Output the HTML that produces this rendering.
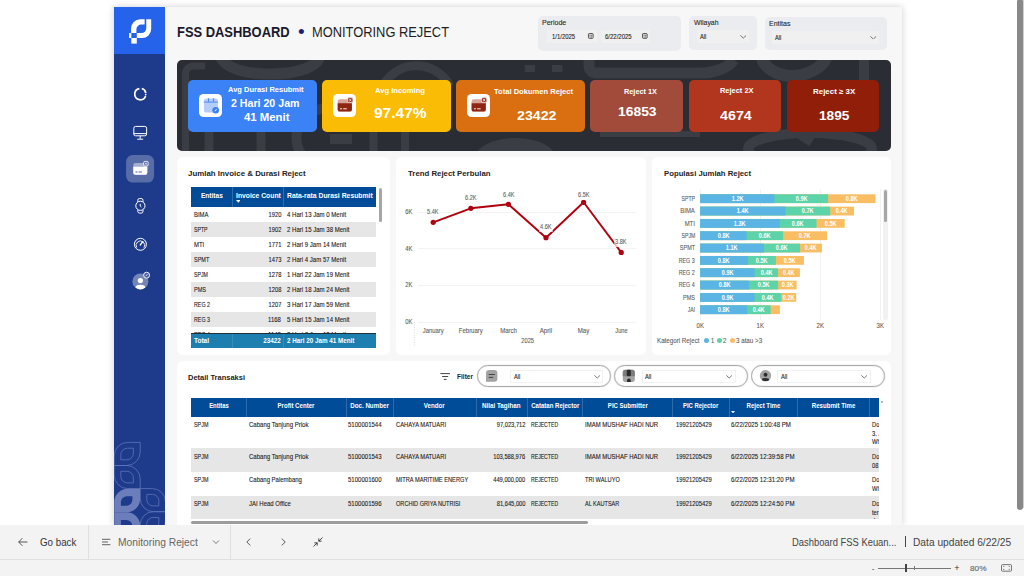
<!DOCTYPE html>
<html lang="id"><head><meta charset="utf-8"><title>FSS Dashboard - Monitoring Reject</title>
<style>
*{box-sizing:border-box}
html,body{margin:0;padding:0}
body{width:1024px;height:576px;overflow:hidden;background:#fff;position:relative;font-family:'Liberation Sans',sans-serif}
#r{position:absolute;left:0;top:0;width:1024px;height:576px;overflow:hidden}
#r div,#r span,#r svg{position:absolute}
#r span{white-space:pre;display:block}
#r span.s{-webkit-text-stroke:.1px currentColor}
</style></head>
<body><div id="r">
<div style="left:114px;top:7.2px;width:788px;height:518px;background:#f7f7f7;box-shadow:0 0 7px rgba(0,0,0,.2);"></div>
<div style="left:113.8px;top:7px;width:51.3px;height:518px;background:#1e3a8a;"></div>
<div style="left:113.8px;top:7px;width:51.3px;height:46.8px;background:#2563eb;"></div>
<svg style="left:113.8px;top:7px" width="51.3" height="518" viewBox="113.8 7 51.3 518"><path fill="#fff" d="M144.4 19.3H139.9A9 9 0 0 0 130.9 28.3V33.1H136.2V29.3A4.8 4.8 0 0 1 141 24.5H144.4Z"/><path fill="#fff" d="M146.1 19.3H151V29A9 9 0 0 1 142 38H136.6V33.1H141.3A4.8 4.8 0 0 0 146.1 28.3Z"/><rect x="128.9" y="33.1" width="2.2" height="4.9" fill="#fff"/><rect x="131.1" y="38" width="5.5" height="5.6" fill="#fff"/><g fill="none" stroke="#fff" stroke-width="1.7"><path d="M141.6 88.5A5.6 5.6 0 0 1 145.6 93"/><path d="M145.4 96A5.6 5.6 0 1 1 139.2 88.6"/></g><circle cx="145.5" cy="94.6" r=".9" fill="#fff"/><g fill="none" stroke="#fff" stroke-width="1"><rect x="133.6" y="126.4" width="12.8" height="9.4" rx="1.8"/><path d="M133.6 133.6h12.8M140 135.8v3M137 139.2h6"/></g><rect x="125.9" y="155" width="28" height="27.6" rx="6.5" fill="#fff" fill-opacity=".26"/><rect x="133.1" y="163" width="14" height="11.7" rx="2" fill="#fff" fill-opacity=".45"/><path d="M133.1 166.7h14v6a2 2 0 0 1-2 2h-10a2 2 0 0 1-2-2z" fill="#fff"/><path d="M135.3 172h2M138.3 172h3.4" stroke="#3a54a0" stroke-width=".9"/><rect x="143.4" y="161.4" width="4.6" height="4.6" rx="1.2" fill="#5a6eae" stroke="#fff" stroke-width=".8"/><path d="M144.7 162.7l2 2M146.7 162.7l-2 2" stroke="#fff" stroke-width=".7"/><g fill="none" stroke="#fff" stroke-width="1"><circle cx="140.2" cy="205.8" r="4.6"/><path d="M137.6 201.9v-1.6a1.8 1.8 0 0 1 1.8-1.8h1.6a1.8 1.8 0 0 1 1.8 1.8v1.6M137.6 209.7v1.6a1.8 1.8 0 0 0 1.8 1.8h1.6a1.8 1.8 0 0 0 1.8-1.8v-1.6M140 203.8v2.2l1.2 1"/></g><g fill="none" stroke="#fff"><circle cx="140.2" cy="244.3" r="6" stroke-width="1"/><path d="M136.6 247.6A4.3 4.3 0 1 1 143.8 247.6" stroke-width=".9"/><path d="M140 245l2.6-3.4" stroke-width="1.3" stroke-linecap="round"/></g><circle cx="140.2" cy="281.4" r="8" fill="#fff" fill-opacity=".38"/><circle cx="140.2" cy="280.6" r="2.6" fill="#fff"/><path d="M135.2 287.6a5 2.9 0 0 1 10 0a8 8 0 0 1-10 0z" fill="#fff"/><circle cx="146.4" cy="275.2" r="3" fill="#4a5fa6" stroke="#fff" stroke-width=".9"/><path d="M145.4 276.2l1.9-2" stroke="#fff" stroke-width=".8"/><g fill="none" stroke="#5f75ba" stroke-width=".8"><path d="M127.5 442.4H140.0V452.0A13.5 13.5 0 0 1 126.5 465.5H114.0V455.9A13.5 13.5 0 0 1 127.5 442.4Z"/><path d="M127.2 448.2H133.2V453.2A6.6 6.6 0 0 1 126.6 459.8H120.6V454.8A6.6 6.6 0 0 1 127.2 448.2Z"/><path d="M114.0 465.5H126.5A13.5 13.5 0 0 1 140.0 479.0V488.6H127.5A13.5 13.5 0 0 1 114.0 475.1Z"/><path d="M120.6 471.3H126.6A6.6 6.6 0 0 1 133.2 477.9V482.9H127.2A6.6 6.6 0 0 1 120.6 476.3Z"/><path d="M140.0 488.6H152.1A13.2 13.2 0 0 1 165.3 501.8V511.7H153.2A13.2 13.2 0 0 1 140.0 498.5Z"/><path d="M146.6 494.4H152.4A6.2 6.2 0 0 1 158.6 500.6V505.9H152.8A6.2 6.2 0 0 1 146.6 499.7Z"/><path d="M153.2 511.7H165.3V521.6A13.2 13.2 0 0 1 152.1 534.8H140.0V524.9A13.2 13.2 0 0 1 153.2 511.7Z"/><path d="M152.8 517.5H158.6V522.8A6.2 6.2 0 0 1 152.4 529.0H146.6V523.7A6.2 6.2 0 0 1 152.8 517.5Z"/></g><path fill="#6b7dba" fill-rule="evenodd" d="M127.5 488.7H140.0V498.7A13.5 13.5 0 0 1 126.5 512.2H114.0V502.2A13.5 13.5 0 0 1 127.5 488.7ZM126.7 496.2H132.2V499.8A6.0 6.0 0 0 1 126.2 505.8H120.7V502.2A6.0 6.0 0 0 1 126.7 496.2Z"/><path fill="#6b7dba" fill-rule="evenodd" d="M114.0 512.2H126.5A13.5 13.5 0 0 1 140.0 525.7V535.6H127.5A13.5 13.5 0 0 1 114.0 522.1ZM120.7 520.0H126.2A6.0 6.0 0 0 1 132.2 526.0V529.6H126.7A6.0 6.0 0 0 1 120.7 523.6Z"/></svg>
<span style="left:176.60px;top:23px;font-size:14.2px;line-height:18px;font-weight:700;color:#1a1a2e;transform:scaleX(0.9098);transform-origin:0 0;">FSS DASHBOARD</span>
<span style="left:297.97px;top:20px;font-size:19px;line-height:23px;color:#1a1f80;transform:scaleX(1.0000);transform-origin:50% 0;">•</span>
<span style="left:312.40px;top:23px;font-size:14.2px;line-height:18px;color:#1f1f1f;transform:scaleX(0.9068);transform-origin:0 0;">MONITORING REJECT</span>
<div style="left:537.5px;top:16px;width:143.5px;height:34.5px;background:#ebecf0;border-radius:5px;"></div>
<div style="left:689px;top:16px;width:67.5px;height:34px;background:#ebecf0;border-radius:5px;"></div>
<div style="left:764.5px;top:17px;width:122.5px;height:32.5px;background:#ebecf0;border-radius:5px;"></div>
<span class="s" style="left:541.90px;top:17px;font-size:7.6px;line-height:11px;color:#252423;transform:scaleX(0.9241);transform-origin:0 0;">Periode</span>
<div style="left:547px;top:30.3px;width:49.6px;height:13.1px;background:#f0f0f0;"></div>
<div style="left:600.9px;top:30.3px;width:49.4px;height:13.1px;background:#f0f0f0;"></div>
<span class="s" style="left:551.80px;top:32px;font-size:7px;line-height:9px;color:#252423;transform:scaleX(0.8477);transform-origin:0 0;">1/1/2025</span>
<span class="s" style="left:605.40px;top:32px;font-size:7px;line-height:9px;color:#252423;transform:scaleX(0.8570);transform-origin:0 0;">6/22/2025</span>
<svg style="left:586.7px;top:31.9px" width="8" height="8" viewBox="-1 -1 8 8"><rect x=".45" y=".5" width="4.7" height="4.8" rx=".8" fill="#e9e9e9" stroke="#4a4a4a" stroke-width=".9"/><path d="M.45 2h4.7M2.1 2v3.3M3.5 2v3.3" stroke="#5a5a5a" stroke-width=".5"/></svg>
<svg style="left:640.6px;top:31.9px" width="8" height="8" viewBox="-1 -1 8 8"><rect x=".45" y=".5" width="4.7" height="4.8" rx=".8" fill="#e9e9e9" stroke="#4a4a4a" stroke-width=".9"/><path d="M.45 2h4.7M2.1 2v3.3M3.5 2v3.3" stroke="#5a5a5a" stroke-width=".5"/></svg>
<span class="s" style="left:693.80px;top:17px;font-size:7.6px;line-height:11px;color:#252423;transform:scaleX(0.9069);transform-origin:0 0;">Wilayah</span>
<div style="left:697.1px;top:30.4px;width:52px;height:12.5px;background:#f0f0f0;"></div>
<span class="s" style="left:699.70px;top:32px;font-size:6.6px;line-height:9px;color:#252423;transform:scaleX(0.8597);transform-origin:0 0;">All</span>
<span class="s" style="left:769.00px;top:18px;font-size:7.6px;line-height:11px;color:#252423;transform:scaleX(0.9260);transform-origin:0 0;">Entitas</span>
<div style="left:772.2px;top:31.2px;width:107.1px;height:12.4px;background:#f0f0f0;"></div>
<span class="s" style="left:774.90px;top:33px;font-size:6.6px;line-height:9px;color:#252423;transform:scaleX(0.8597);transform-origin:0 0;">All</span>
<svg style="left:739.8px;top:35px" width="6.6" height="3.6" viewBox="0 0 6.6 3.6"><path d="M.4 .4L3.3 3.1L6.199999999999999 .4" stroke="#555" stroke-width="0.8" fill="none"/></svg>
<svg style="left:870px;top:35.8px" width="6.6" height="3.6" viewBox="0 0 6.6 3.6"><path d="M.4 .4L3.3 3.1L6.199999999999999 .4" stroke="#555" stroke-width="0.8" fill="none"/></svg>
<div style="left:177px;top:60px;width:714px;height:91px;background:#2a2d33;border-radius:5px;overflow:hidden;"></div>
<svg style="left:177px;top:60px;border-radius:5px;overflow:hidden" width="714" height="91" viewBox="177 60 714 91"><g fill="none" stroke="#3a3d43" stroke-width="9"><path d="M185.5 151V74A8 8 0 0 1 193.5 66H205" stroke-width="7"/><path d="M209 132V151M261 132V151" stroke-width="9"/><path d="M220 56C224 66 240 74 270 74S318 66 320 56" stroke-width="11"/><path d="M381 90A38 38 0 0 1 450 86" stroke-width="9"/><path d="M352 139H330M354 156A32 30 0 1 1 354 120" stroke-width="10"/><path d="M373.5 132V151M405 132V151" stroke-width="8"/><path d="M589 60V66A7 7 0 0 0 596 73H700C715 73 728 68 734 60" stroke-width="11"/><path d="M762 58C764 68 778 76 792 76S822 68 826 58" stroke-width="12"/><path d="M864 60V90" stroke-width="10"/><path d="M600 134H700" stroke-width="6"/><ellipse cx="810" cy="149" rx="62" ry="16" stroke-width="10"/><path d="M800 134L812 142" stroke-width="10"/></g><g fill="#3a3d43"><rect x="524.7" y="65" width="10.3" height="7"/><rect x="552" y="65" width="10.6" height="7"/><ellipse cx="515.5" cy="158" rx="40" ry="20"/></g></svg>
<div style="left:188.3px;top:80px;width:128.3px;height:52px;background:#3b82f6;border-radius:5px;"></div>
<div style="left:322.4px;top:80px;width:128.3px;height:52px;background:#fbbc05;border-radius:5px;"></div>
<div style="left:456.1px;top:80px;width:128.6px;height:52px;background:#d96f10;border-radius:5px;"></div>
<div style="left:590.3px;top:80px;width:92.6px;height:52px;background:#a24b3a;border-radius:5px;"></div>
<div style="left:688.6px;top:80px;width:92.5px;height:52px;background:#b1361d;border-radius:5px;"></div>
<div style="left:786.7px;top:80px;width:92.3px;height:52px;background:#911e08;border-radius:5px;"></div>
<div style="left:199.0px;top:94.1px;width:23px;height:23px;background:#fff;border-radius:4.6px;"></div>
<div style="left:333.0px;top:94.1px;width:23px;height:23px;background:#fff;border-radius:4.6px;"></div>
<div style="left:467.0px;top:94.1px;width:23px;height:23px;background:#fff;border-radius:4.6px;"></div>
<svg style="left:198.6px;top:93px" width="292" height="25" viewBox="199 93 292 25"><rect x="203.9" y="98.6" width="14" height="13.9" rx="2.6" fill="#b4cdfb"/><rect x="203.9" y="101.4" width="14" height="1.5" fill="#6da0f8"/><path d="M208.5 98.2v3.6M213.5 98.2v3.6" stroke="#4b8cf6" stroke-width="1.1"/><circle cx="215.7" cy="110.3" r="3.3" fill="#3b82f6"/><path d="M214.9 111.3l1.6-2.2" stroke="#fff" stroke-width=".9"/><g transform="translate(0 0)"><rect x="337.7" y="99.2" width="14.2" height="12.4" rx="2.2" fill="#d8a399"/><path d="M337.7 103.3h14.2v6.1a2.2 2.2 0 0 1-2.2 2.2h-9.8a2.2 2.2 0 0 1-2.2-2.2z" fill="#8f2410"/><path d="M340 108.8h2M343.2 108.8h3.6" stroke="#fff" stroke-width=".9"/><rect x="347.7" y="97.6" width="5.2" height="5" rx="1.4" fill="#9a3522" stroke="#fff" stroke-width=".6"/><path d="M349.2 99l2.2 2.2M351.4 99l-2.2 2.2" stroke="#fff" stroke-width=".8"/></g><g transform="translate(133.9 0)"><rect x="337.7" y="99.2" width="14.2" height="12.4" rx="2.2" fill="#d8a399"/><path d="M337.7 103.3h14.2v6.1a2.2 2.2 0 0 1-2.2 2.2h-9.8a2.2 2.2 0 0 1-2.2-2.2z" fill="#8f2410"/><path d="M340 108.8h2M343.2 108.8h3.6" stroke="#fff" stroke-width=".9"/><rect x="347.7" y="97.6" width="5.2" height="5" rx="1.4" fill="#9a3522" stroke="#fff" stroke-width=".6"/><path d="M349.2 99l2.2 2.2M351.4 99l-2.2 2.2" stroke="#fff" stroke-width=".8"/></g></svg>
<span style="left:227.80px;top:84px;font-size:7.2px;line-height:11px;font-weight:700;color:#fff;transform:scaleX(1.0437);transform-origin:0 0;">Avg Durasi Resubmit</span>
<span style="left:230.70px;top:97px;font-size:10.4px;line-height:13px;font-weight:700;color:#fff;transform:scaleX(1.0221);transform-origin:0 0;">2 Hari 20 Jam</span>
<span style="left:243.80px;top:111px;font-size:10.4px;line-height:13px;font-weight:700;color:#fff;transform:scaleX(1.0943);transform-origin:0 0;">41 Menit</span>
<span style="left:374.80px;top:85px;font-size:7.2px;line-height:11px;font-weight:700;color:#fff;transform:scaleX(1.0579);transform-origin:0 0;">Avg Incoming</span>
<span style="left:373.90px;top:103px;font-size:15px;line-height:19px;font-weight:700;color:#fff;transform:scaleX(1.0319);transform-origin:0 0;">97.47%</span>
<span style="left:494.20px;top:86px;font-size:7.2px;line-height:11px;font-weight:700;color:#fff;transform:scaleX(1.0540);transform-origin:0 0;">Total Dokumen Reject</span>
<span style="left:516.80px;top:107px;font-size:13.6px;line-height:17px;font-weight:700;color:#fff;transform:scaleX(1.0446);transform-origin:0 0;">23422</span>
<span style="left:623.70px;top:86px;font-size:7.2px;line-height:11px;font-weight:700;color:#fff;transform:scaleX(1.0193);transform-origin:0 0;">Reject 1X</span>
<span style="left:617.60px;top:103px;font-size:13.6px;line-height:17px;font-weight:700;color:#fff;transform:scaleX(1.0208);transform-origin:0 0;">16853</span>
<span style="left:720.30px;top:85px;font-size:7.2px;line-height:11px;font-weight:700;color:#fff;transform:scaleX(1.0347);transform-origin:0 0;">Reject 2X</span>
<span style="left:720.00px;top:107px;font-size:13.6px;line-height:17px;font-weight:700;color:#fff;transform:scaleX(1.0512);transform-origin:0 0;">4674</span>
<span style="left:813.00px;top:86px;font-size:7.2px;line-height:11px;font-weight:700;color:#fff;transform:scaleX(1.1041);transform-origin:0 0;">Reject ≥ 3X</span>
<span style="left:819.00px;top:107px;font-size:13.6px;line-height:17px;font-weight:700;color:#fff;transform:scaleX(1.0083);transform-origin:0 0;">1895</span>
<div style="left:177px;top:157px;width:213px;height:198px;background:#fff;border-radius:6px;"></div>
<div style="left:395.5px;top:157px;width:250.3px;height:198px;background:#fff;border-radius:6px;"></div>
<div style="left:651.8px;top:157px;width:239px;height:198px;background:#fff;border-radius:6px;"></div>
<div style="left:177px;top:361px;width:714px;height:170px;background:#fff;border-radius:6px;"></div>
<span style="left:187.80px;top:168px;font-size:8px;line-height:11px;font-weight:700;color:#252423;transform:scaleX(0.9869);transform-origin:0 0;">Jumlah Invoice &amp; Durasi Reject</span>
<div style="left:190.6px;top:187px;width:185.4px;height:146.4px;overflow:hidden">
<span class="s" style="left:3.10px;top:23px;font-size:6.9px;line-height:9px;color:#1a1918;transform:scaleX(0.8601);transform-origin:0 0;">BIMA</span>
<span class="s" style="left:74.96px;top:23px;font-size:6.9px;line-height:9px;color:#1a1918;transform:scaleX(0.8342);transform-origin:100% 0;">1920</span>
<span class="s" style="left:96.10px;top:23px;font-size:6.9px;line-height:9px;color:#1a1918;transform:scaleX(0.8770);transform-origin:0 0;">4 Hari 13 Jam 0 Menit</span>
<div style="left:0px;top:34.6px;width:185.4px;height:15px;background:#e6e6e6;"></div>
<span class="s" style="left:3.10px;top:38px;font-size:6.9px;line-height:9px;color:#1a1918;transform:scaleX(0.7500);transform-origin:0 0;">SPTP</span>
<span class="s" style="left:74.96px;top:38px;font-size:6.9px;line-height:9px;color:#1a1918;transform:scaleX(0.8342);transform-origin:100% 0;">1902</span>
<span class="s" style="left:96.10px;top:38px;font-size:6.9px;line-height:9px;color:#1a1918;transform:scaleX(0.8770);transform-origin:0 0;">2 Hari 15 Jam 38 Menit</span>
<span class="s" style="left:3.10px;top:53px;font-size:6.9px;line-height:9px;color:#1a1918;transform:scaleX(0.8589);transform-origin:0 0;">MTI</span>
<span class="s" style="left:74.96px;top:53px;font-size:6.9px;line-height:9px;color:#1a1918;transform:scaleX(0.8342);transform-origin:100% 0;">1771</span>
<span class="s" style="left:96.10px;top:53px;font-size:6.9px;line-height:9px;color:#1a1918;transform:scaleX(0.8770);transform-origin:0 0;">2 Hari 9 Jam 14 Menit</span>
<div style="left:0px;top:64.6px;width:185.4px;height:15px;background:#e6e6e6;"></div>
<span class="s" style="left:3.10px;top:68px;font-size:6.9px;line-height:9px;color:#1a1918;transform:scaleX(0.7987);transform-origin:0 0;">SPMT</span>
<span class="s" style="left:74.96px;top:68px;font-size:6.9px;line-height:9px;color:#1a1918;transform:scaleX(0.8342);transform-origin:100% 0;">1473</span>
<span class="s" style="left:96.10px;top:68px;font-size:6.9px;line-height:9px;color:#1a1918;transform:scaleX(0.8770);transform-origin:0 0;">2 Hari 4 Jam 57 Menit</span>
<span class="s" style="left:3.10px;top:83px;font-size:6.9px;line-height:9px;color:#1a1918;transform:scaleX(0.7558);transform-origin:0 0;">SPJM</span>
<span class="s" style="left:74.96px;top:83px;font-size:6.9px;line-height:9px;color:#1a1918;transform:scaleX(0.8342);transform-origin:100% 0;">1278</span>
<span class="s" style="left:96.10px;top:83px;font-size:6.9px;line-height:9px;color:#1a1918;transform:scaleX(0.8770);transform-origin:0 0;">1 Hari 22 Jam 19 Menit</span>
<div style="left:0px;top:94.6px;width:185.4px;height:15px;background:#e6e6e6;"></div>
<span class="s" style="left:3.10px;top:98px;font-size:6.9px;line-height:9px;color:#1a1918;transform:scaleX(0.8033);transform-origin:0 0;">PMS</span>
<span class="s" style="left:74.96px;top:98px;font-size:6.9px;line-height:9px;color:#1a1918;transform:scaleX(0.8342);transform-origin:100% 0;">1208</span>
<span class="s" style="left:96.10px;top:98px;font-size:6.9px;line-height:9px;color:#1a1918;transform:scaleX(0.8770);transform-origin:0 0;">2 Hari 18 Jam 24 Menit</span>
<span class="s" style="left:3.10px;top:113px;font-size:6.9px;line-height:9px;color:#1a1918;transform:scaleX(0.7734);transform-origin:0 0;">REG 2</span>
<span class="s" style="left:74.96px;top:113px;font-size:6.9px;line-height:9px;color:#1a1918;transform:scaleX(0.8342);transform-origin:100% 0;">1207</span>
<span class="s" style="left:96.10px;top:113px;font-size:6.9px;line-height:9px;color:#1a1918;transform:scaleX(0.8770);transform-origin:0 0;">3 Hari 17 Jam 59 Menit</span>
<div style="left:0px;top:124.6px;width:185.4px;height:15px;background:#e6e6e6;"></div>
<span class="s" style="left:3.10px;top:128px;font-size:6.9px;line-height:9px;color:#1a1918;transform:scaleX(0.7734);transform-origin:0 0;">REG 3</span>
<span class="s" style="left:75.47px;top:128px;font-size:6.9px;line-height:9px;color:#1a1918;transform:scaleX(0.8632);transform-origin:100% 0;">1168</span>
<span class="s" style="left:96.10px;top:128px;font-size:6.9px;line-height:9px;color:#1a1918;transform:scaleX(0.8770);transform-origin:0 0;">5 Hari 15 Jam 14 Menit</span>
<span class="s" style="left:3.10px;top:143px;font-size:6.9px;line-height:9px;color:#1a1918;transform:scaleX(0.7734);transform-origin:0 0;">REG 4</span>
<span class="s" style="left:75.47px;top:143px;font-size:6.9px;line-height:9px;color:#1a1918;transform:scaleX(0.8632);transform-origin:100% 0;">1142</span>
<span class="s" style="left:96.10px;top:143px;font-size:6.9px;line-height:9px;color:#1a1918;transform:scaleX(0.8770);transform-origin:0 0;">2 Hari 8 Jam 13 Menit</span>
</div>
<div style="left:190.6px;top:187.3px;width:185.4px;height:19.3px;background:#004c99;"></div>
<div style="left:232.2px;top:187.3px;width:0.6px;height:19.3px;background:rgba(255,255,255,.18);"></div>
<div style="left:283.3px;top:187.3px;width:0.6px;height:19.3px;background:rgba(255,255,255,.18);"></div>
<span style="left:200.70px;top:190px;font-size:7.2px;line-height:11px;font-weight:700;color:#fff;transform:scaleX(0.9095);transform-origin:0 0;">Entitas</span>
<span style="left:235.60px;top:190px;font-size:7.2px;line-height:11px;font-weight:700;color:#fff;transform:scaleX(0.9425);transform-origin:0 0;">Invoice Count</span>
<span style="left:286.90px;top:190px;font-size:7.2px;line-height:11px;font-weight:700;color:#fff;transform:scaleX(0.9504);transform-origin:0 0;">Rata-rata Durasi Resubmit</span>
<svg style="left:235.5px;top:200.2px" width="4.6" height="2.7" viewBox="0 0 4.6 2.7"><path d="M0 0h4.6L2.3 2.7z" fill="#fff"/></svg>
<div style="left:190.6px;top:333px;width:185.4px;height:0.8px;background:#1c2f3a;"></div>
<div style="left:190.6px;top:333.6px;width:185.4px;height:14.4px;background:#1d7eb0;"></div>
<div style="left:232.2px;top:333.6px;width:0.6px;height:14.4px;background:rgba(255,255,255,.12);"></div>
<div style="left:283.3px;top:333.6px;width:0.6px;height:14.4px;background:rgba(255,255,255,.12);"></div>
<span style="left:193.70px;top:336px;font-size:6.4px;line-height:9px;font-weight:700;color:#fff;transform:scaleX(1.0137);transform-origin:0 0;">Total</span>
<span style="left:263.12px;top:336px;font-size:6.4px;line-height:9px;font-weight:700;color:#fff;transform:scaleX(0.9898);transform-origin:100% 0;">23422</span>
<span style="left:286.70px;top:336px;font-size:6.4px;line-height:9px;font-weight:700;color:#fff;transform:scaleX(0.9816);transform-origin:0 0;">2 Hari 20 Jam 41 Menit</span>
<div style="left:378.6px;top:187.8px;width:3.4px;height:34px;background:#a6a6a6;border-radius:1.7px;"></div>
<span style="left:408.20px;top:168px;font-size:8px;line-height:11px;font-weight:700;color:#252423;transform:scaleX(0.9767);transform-origin:0 0;">Trend Reject Perbulan</span>
<div style="left:418.3px;top:321.7px;width:217.8px;height:0.8px;background:#f3f3f3;"></div>
<span class="s" style="left:404.36px;top:317px;font-size:6.9px;line-height:9px;color:#605e5c;transform:scaleX(0.8533);transform-origin:100% 0;">0K</span>
<div style="left:418.3px;top:285.0px;width:217.8px;height:0.8px;background:#f3f3f3;"></div>
<span class="s" style="left:404.36px;top:280px;font-size:6.9px;line-height:9px;color:#605e5c;transform:scaleX(0.8533);transform-origin:100% 0;">2K</span>
<div style="left:418.3px;top:248.3px;width:217.8px;height:0.8px;background:#f3f3f3;"></div>
<span class="s" style="left:404.36px;top:244px;font-size:6.9px;line-height:9px;color:#605e5c;transform:scaleX(0.8533);transform-origin:100% 0;">4K</span>
<div style="left:418.3px;top:211.6px;width:217.8px;height:0.8px;background:#f3f3f3;"></div>
<span class="s" style="left:404.36px;top:207px;font-size:6.9px;line-height:9px;color:#605e5c;transform:scaleX(0.8533);transform-origin:100% 0;">6K</span>
<svg style="left:395px;top:157px" width="251" height="198" viewBox="395 157 251 198"><path d="M414.4 322v24" stroke="#c8c8c8" stroke-width=".7" stroke-dasharray="1 1.5" fill="none"/><path d="M433.2 222.3 L470.8 208.3 L508.4 204.3 L546.0 237.7 L583.6 202.3 L621.2 252.4" fill="none" stroke="#b1000e" stroke-width="1.9" stroke-linejoin="round"/><circle cx="433.2" cy="222.3" r="2.6" fill="#b1000e"/><circle cx="470.8" cy="208.3" r="2.6" fill="#b1000e"/><circle cx="508.4" cy="204.3" r="2.6" fill="#b1000e"/><circle cx="546.0" cy="237.7" r="2.6" fill="#b1000e"/><circle cx="583.6" cy="202.3" r="2.6" fill="#b1000e"/><circle cx="621.2" cy="252.4" r="2.6" fill="#b1000e"/></svg>
<span class="s" style="left:426.41px;top:207px;font-size:6.6px;line-height:9px;color:#605e5c;transform:scaleX(0.8470);transform-origin:50% 0;background:rgba(255,255,255,.75);box-shadow:0 0 0 1px rgba(255,255,255,.75);">5.4K</span>
<span class="s" style="left:420.94px;top:326px;font-size:6.9px;line-height:9px;color:#605e5c;transform:scaleX(0.8484);transform-origin:50% 0;">January</span>
<span class="s" style="left:464.01px;top:193px;font-size:6.6px;line-height:9px;color:#605e5c;transform:scaleX(0.8470);transform-origin:50% 0;background:rgba(255,255,255,.75);box-shadow:0 0 0 1px rgba(255,255,255,.75);">6.2K</span>
<span class="s" style="left:457.01px;top:326px;font-size:6.9px;line-height:9px;color:#605e5c;transform:scaleX(0.8666);transform-origin:50% 0;">February</span>
<span class="s" style="left:501.61px;top:190px;font-size:6.6px;line-height:9px;color:#605e5c;transform:scaleX(0.8470);transform-origin:50% 0;background:rgba(255,255,255,.75);box-shadow:0 0 0 1px rgba(255,255,255,.75);">6.4K</span>
<span class="s" style="left:498.82px;top:326px;font-size:6.9px;line-height:9px;color:#605e5c;transform:scaleX(0.8770);transform-origin:50% 0;">March</span>
<span class="s" style="left:539.21px;top:222px;font-size:6.6px;line-height:9px;color:#605e5c;transform:scaleX(0.8470);transform-origin:50% 0;background:rgba(255,255,255,.75);box-shadow:0 0 0 1px rgba(255,255,255,.75);">4.6K</span>
<span class="s" style="left:539.10px;top:326px;font-size:6.9px;line-height:9px;color:#605e5c;transform:scaleX(0.8988);transform-origin:50% 0;">April</span>
<span class="s" style="left:576.81px;top:190px;font-size:6.6px;line-height:9px;color:#605e5c;transform:scaleX(0.8470);transform-origin:50% 0;background:rgba(255,255,255,.75);box-shadow:0 0 0 1px rgba(255,255,255,.75);">6.5K</span>
<span class="s" style="left:577.08px;top:326px;font-size:6.9px;line-height:9px;color:#605e5c;transform:scaleX(0.8902);transform-origin:50% 0;">May</span>
<span class="s" style="left:614.41px;top:237px;font-size:6.6px;line-height:9px;color:#605e5c;transform:scaleX(0.8470);transform-origin:50% 0;background:rgba(255,255,255,.75);box-shadow:0 0 0 1px rgba(255,255,255,.75);">3.8K</span>
<span class="s" style="left:613.72px;top:326px;font-size:6.9px;line-height:9px;color:#605e5c;transform:scaleX(0.8293);transform-origin:50% 0;">June</span>
<span class="s" style="left:519.63px;top:336px;font-size:6.9px;line-height:9px;color:#605e5c;transform:scaleX(0.8212);transform-origin:50% 0;">2025</span>
<span style="left:663.80px;top:168px;font-size:8px;line-height:11px;font-weight:700;color:#252423;transform:scaleX(0.9687);transform-origin:0 0;">Populasi Jumlah Reject</span>
<div style="left:699.8px;top:188.5px;width:0.8px;height:131.5px;background:#f1f1f1;"></div>
<span class="s" style="left:695.98px;top:321px;font-size:6.9px;line-height:9px;color:#605e5c;transform:scaleX(0.8770);transform-origin:50% 0;">0K</span>
<div style="left:760.0px;top:188.5px;width:0.8px;height:131.5px;background:#f1f1f1;"></div>
<span class="s" style="left:756.13px;top:321px;font-size:6.9px;line-height:9px;color:#605e5c;transform:scaleX(0.8770);transform-origin:50% 0;">1K</span>
<div style="left:820.1px;top:188.5px;width:0.8px;height:131.5px;background:#f1f1f1;"></div>
<span class="s" style="left:816.28px;top:321px;font-size:6.9px;line-height:9px;color:#605e5c;transform:scaleX(0.8770);transform-origin:50% 0;">2K</span>
<div style="left:880.3px;top:188.5px;width:0.8px;height:131.5px;background:#f1f1f1;"></div>
<span class="s" style="left:876.43px;top:321px;font-size:6.9px;line-height:9px;color:#605e5c;transform:scaleX(0.8770);transform-origin:50% 0;">3K</span>
<svg style="left:700px;top:194px" width="180" height="11" viewBox="700 194 180 11"><rect x="700.2" y="194.30" width="175.3" height="8.8" fill="#f9be63"/><rect x="700.2" y="194.30" width="127.9" height="8.8" fill="#5cd3a9"/><rect x="700.2" y="194.30" width="74.2" height="8.8" fill="#5ab4e4"/></svg>
<span class="s" style="left:677.10px;top:194px;font-size:6.9px;line-height:9px;color:#605e5c;transform:scaleX(0.7500);transform-origin:100% 0;">SPTP</span>
<span style="left:730.55px;top:194px;font-size:6.4px;line-height:9px;font-weight:700;color:#fff;transform:scaleX(0.8741);transform-origin:50% 0;">1.2K</span>
<span style="left:794.50px;top:194px;font-size:6.4px;line-height:9px;font-weight:700;color:#fff;transform:scaleX(0.8741);transform-origin:50% 0;">0.9K</span>
<span style="left:845.05px;top:194px;font-size:6.4px;line-height:9px;font-weight:700;color:#fff;transform:scaleX(0.8741);transform-origin:50% 0;">0.8K</span>
<svg style="left:700px;top:206px" width="180" height="11" viewBox="700 206 180 11"><rect x="700.2" y="206.64" width="153.8" height="8.8" fill="#f9be63"/><rect x="700.2" y="206.64" width="130.0" height="8.8" fill="#5cd3a9"/><rect x="700.2" y="206.64" width="85.3" height="8.8" fill="#5ab4e4"/></svg>
<span class="s" style="left:678.24px;top:206px;font-size:6.9px;line-height:9px;color:#605e5c;transform:scaleX(0.8660);transform-origin:100% 0;">BIMA</span>
<span style="left:736.10px;top:206px;font-size:6.4px;line-height:9px;font-weight:700;color:#fff;transform:scaleX(0.8741);transform-origin:50% 0;">1.4K</span>
<span style="left:801.10px;top:206px;font-size:6.4px;line-height:9px;font-weight:700;color:#fff;transform:scaleX(0.8741);transform-origin:50% 0;">0.7K</span>
<span style="left:835.35px;top:206px;font-size:6.4px;line-height:9px;font-weight:700;color:#fff;transform:scaleX(0.8741);transform-origin:50% 0;">0.4K</span>
<svg style="left:700px;top:218px" width="180" height="11" viewBox="700 218 180 11"><rect x="700.2" y="218.97" width="144.5" height="8.8" fill="#f9be63"/><rect x="700.2" y="218.97" width="116.3" height="8.8" fill="#5cd3a9"/><rect x="700.2" y="218.97" width="79.6" height="8.8" fill="#5ab4e4"/></svg>
<span class="s" style="left:683.23px;top:219px;font-size:6.9px;line-height:9px;color:#605e5c;transform:scaleX(0.8589);transform-origin:100% 0;">MTI</span>
<span style="left:733.25px;top:219px;font-size:6.4px;line-height:9px;font-weight:700;color:#fff;transform:scaleX(0.8741);transform-origin:50% 0;">1.3K</span>
<span style="left:791.40px;top:219px;font-size:6.4px;line-height:9px;font-weight:700;color:#fff;transform:scaleX(0.8741);transform-origin:50% 0;">0.6K</span>
<span style="left:823.85px;top:219px;font-size:6.4px;line-height:9px;font-weight:700;color:#fff;transform:scaleX(0.8741);transform-origin:50% 0;">0.5K</span>
<svg style="left:700px;top:231px" width="180" height="11" viewBox="700 231 180 11"><rect x="700.2" y="231.31" width="126.8" height="8.8" fill="#f9be63"/><rect x="700.2" y="231.31" width="82.9" height="8.8" fill="#5cd3a9"/><rect x="700.2" y="231.31" width="46.3" height="8.8" fill="#5ab4e4"/></svg>
<span class="s" style="left:676.71px;top:231px;font-size:6.9px;line-height:9px;color:#605e5c;transform:scaleX(0.7558);transform-origin:100% 0;">SPJM</span>
<span style="left:716.60px;top:231px;font-size:6.4px;line-height:9px;font-weight:700;color:#fff;transform:scaleX(0.8741);transform-origin:50% 0;">0.8K</span>
<span style="left:758.05px;top:231px;font-size:6.4px;line-height:9px;font-weight:700;color:#fff;transform:scaleX(0.8741);transform-origin:50% 0;">0.6K</span>
<span style="left:798.30px;top:231px;font-size:6.4px;line-height:9px;font-weight:700;color:#fff;transform:scaleX(0.8741);transform-origin:50% 0;">0.7K</span>
<svg style="left:700px;top:243px" width="180" height="11" viewBox="700 243 180 11"><rect x="700.2" y="243.64" width="121.8" height="8.8" fill="#f9be63"/><rect x="700.2" y="243.64" width="99.9" height="8.8" fill="#5cd3a9"/><rect x="700.2" y="243.64" width="63.6" height="8.8" fill="#5ab4e4"/></svg>
<span class="s" style="left:675.94px;top:243px;font-size:6.9px;line-height:9px;color:#605e5c;transform:scaleX(0.7987);transform-origin:100% 0;">SPMT</span>
<span style="left:725.25px;top:243px;font-size:6.4px;line-height:9px;font-weight:700;color:#fff;transform:scaleX(0.8741);transform-origin:50% 0;">1.1K</span>
<span style="left:775.20px;top:243px;font-size:6.4px;line-height:9px;font-weight:700;color:#fff;transform:scaleX(0.8741);transform-origin:50% 0;">0.6K</span>
<span style="left:804.30px;top:243px;font-size:6.4px;line-height:9px;font-weight:700;color:#fff;transform:scaleX(0.8741);transform-origin:50% 0;">0.4K</span>
<svg style="left:700px;top:255px" width="180" height="11" viewBox="700 255 180 11"><rect x="700.2" y="255.98" width="103.7" height="8.8" fill="#f9be63"/><rect x="700.2" y="255.98" width="75.7" height="8.8" fill="#5cd3a9"/><rect x="700.2" y="255.98" width="47.8" height="8.8" fill="#5ab4e4"/></svg>
<span class="s" style="left:674.41px;top:256px;font-size:6.9px;line-height:9px;color:#605e5c;transform:scaleX(0.7734);transform-origin:100% 0;">REG 3</span>
<span style="left:717.35px;top:256px;font-size:6.4px;line-height:9px;font-weight:700;color:#fff;transform:scaleX(0.8741);transform-origin:50% 0;">0.8K</span>
<span style="left:755.20px;top:256px;font-size:6.4px;line-height:9px;font-weight:700;color:#fff;transform:scaleX(0.8741);transform-origin:50% 0;">0.5K</span>
<span style="left:783.15px;top:256px;font-size:6.4px;line-height:9px;font-weight:700;color:#fff;transform:scaleX(0.8741);transform-origin:50% 0;">0.5K</span>
<svg style="left:700px;top:268px" width="180" height="11" viewBox="700 268 180 11"><rect x="700.2" y="268.31" width="99.7" height="8.8" fill="#f9be63"/><rect x="700.2" y="268.31" width="77.7" height="8.8" fill="#5cd3a9"/><rect x="700.2" y="268.31" width="54.4" height="8.8" fill="#5ab4e4"/></svg>
<span class="s" style="left:674.41px;top:268px;font-size:6.9px;line-height:9px;color:#605e5c;transform:scaleX(0.7734);transform-origin:100% 0;">REG 2</span>
<span style="left:720.65px;top:268px;font-size:6.4px;line-height:9px;font-weight:700;color:#fff;transform:scaleX(0.8741);transform-origin:50% 0;">0.9K</span>
<span style="left:759.50px;top:268px;font-size:6.4px;line-height:9px;font-weight:700;color:#fff;transform:scaleX(0.8741);transform-origin:50% 0;">0.4K</span>
<span style="left:782.15px;top:268px;font-size:6.4px;line-height:9px;font-weight:700;color:#fff;transform:scaleX(0.8741);transform-origin:50% 0;">0.4K</span>
<svg style="left:700px;top:280px" width="180" height="11" viewBox="700 280 180 11"><rect x="700.2" y="280.64" width="96.4" height="8.8" fill="#f9be63"/><rect x="700.2" y="280.64" width="77.9" height="8.8" fill="#5cd3a9"/><rect x="700.2" y="280.64" width="48.7" height="8.8" fill="#5ab4e4"/></svg>
<span class="s" style="left:674.41px;top:280px;font-size:6.9px;line-height:9px;color:#605e5c;transform:scaleX(0.7734);transform-origin:100% 0;">REG 4</span>
<span style="left:717.80px;top:280px;font-size:6.4px;line-height:9px;font-weight:700;color:#fff;transform:scaleX(0.8741);transform-origin:50% 0;">0.8K</span>
<span style="left:756.75px;top:280px;font-size:6.4px;line-height:9px;font-weight:700;color:#fff;transform:scaleX(0.8741);transform-origin:50% 0;">0.5K</span>
<span style="left:780.60px;top:280px;font-size:6.4px;line-height:9px;font-weight:700;color:#fff;transform:scaleX(0.8741);transform-origin:50% 0;">0.3K</span>
<svg style="left:700px;top:292px" width="180" height="11" viewBox="700 292 180 11"><rect x="700.2" y="292.98" width="96.0" height="8.8" fill="#f9be63"/><rect x="700.2" y="292.98" width="81.1" height="8.8" fill="#5cd3a9"/><rect x="700.2" y="292.98" width="54.4" height="8.8" fill="#5ab4e4"/></svg>
<span class="s" style="left:680.16px;top:293px;font-size:6.9px;line-height:9px;color:#605e5c;transform:scaleX(0.8033);transform-origin:100% 0;">PMS</span>
<span style="left:720.65px;top:293px;font-size:6.4px;line-height:9px;font-weight:700;color:#fff;transform:scaleX(0.8741);transform-origin:50% 0;">0.9K</span>
<span style="left:761.20px;top:293px;font-size:6.4px;line-height:9px;font-weight:700;color:#fff;transform:scaleX(0.8741);transform-origin:50% 0;">0.4K</span>
<span style="left:782.00px;top:293px;font-size:6.4px;line-height:9px;font-weight:700;color:#fff;transform:scaleX(0.8741);transform-origin:50% 0;">0.2K</span>
<svg style="left:700px;top:305px" width="180" height="11" viewBox="700 305 180 11"><rect x="700.2" y="305.32" width="79.7" height="8.8" fill="#f9be63"/><rect x="700.2" y="305.32" width="70.4" height="8.8" fill="#5cd3a9"/><rect x="700.2" y="305.32" width="46.9" height="8.8" fill="#5ab4e4"/></svg>
<span class="s" style="left:685.13px;top:305px;font-size:6.9px;line-height:9px;color:#605e5c;transform:scaleX(0.7323);transform-origin:100% 0;">JAI</span>
<span style="left:716.90px;top:305px;font-size:6.4px;line-height:9px;font-weight:700;color:#fff;transform:scaleX(0.8741);transform-origin:50% 0;">0.8K</span>
<span style="left:752.10px;top:305px;font-size:6.4px;line-height:9px;font-weight:700;color:#fff;transform:scaleX(0.8741);transform-origin:50% 0;">0.4K</span>
<div style="left:883.4px;top:188.8px;width:4.2px;height:131px;background:#f1f1f1;border-radius:2px;"></div>
<div style="left:883.9px;top:189.5px;width:3.3px;height:32px;background:#a6a6a6;border-radius:1.7px;"></div>
<span class="s" style="left:656.80px;top:336px;font-size:6.9px;line-height:9px;color:#605e5c;transform:scaleX(0.9019);transform-origin:0 0;">Kategori Reject</span>
<div style="left:703.6px;top:337.9px;width:5.6px;height:5.6px;background:#5ab4e4;border-radius:2.8px;"></div>
<span class="s" style="left:710.60px;top:336px;font-size:6.9px;line-height:9px;color:#605e5c;transform:scaleX(0.8325);transform-origin:0 0;">1</span>
<div style="left:716.8px;top:337.9px;width:5.6px;height:5.6px;background:#5cd3a9;border-radius:2.8px;"></div>
<span class="s" style="left:723.40px;top:336px;font-size:6.9px;line-height:9px;color:#605e5c;transform:scaleX(0.8846);transform-origin:0 0;">2</span>
<div style="left:729.7px;top:337.9px;width:5.6px;height:5.6px;background:#f9be63;border-radius:2.8px;"></div>
<span class="s" style="left:736.10px;top:336px;font-size:6.9px;line-height:9px;color:#605e5c;transform:scaleX(0.9019);transform-origin:0 0;">3 atau &gt;3</span>
<span style="left:187.80px;top:372px;font-size:8px;line-height:11px;font-weight:700;color:#252423;transform:scaleX(0.9356);transform-origin:0 0;">Detail Transaksi</span>
<svg style="left:440.4px;top:372px" width="10.4" height="9" viewBox="0 0 10.4 9"><path d="M0.4 1.6h9.6M2.2 4.5h6M3.8 7.4h2.8" stroke="#444" stroke-width="1" fill="none"/></svg>
<span style="left:457.00px;top:371px;font-size:7.2px;line-height:11px;font-weight:700;color:#252423;transform:scaleX(0.9102);transform-origin:0 0;">Filter</span>
<div style="left:477.2px;top:365.4px;width:133.6px;height:21.3px;background:#fff;border-radius:10.7px;border:1px solid #ababab;box-shadow:inset 0 0 0 .6px rgba(0,0,0,.07),0 0 0 .4px rgba(0,0,0,.08);"></div>
<div style="left:510.3px;top:370.4px;width:93.1px;height:12.2px;background:#fff;border:0.7px solid #f1f1f1;"></div>
<span class="s" style="left:513.60px;top:372px;font-size:6.6px;line-height:9px;color:#252423;transform:scaleX(0.8597);transform-origin:0 0;">All</span>
<svg style="left:593.8px;top:375px" width="6.4" height="3.6" viewBox="0 0 6.4 3.6"><path d="M.4 .4L3.2 3.1L6.0 .4" stroke="#555" stroke-width="0.8" fill="none"/></svg>
<div style="left:614.0px;top:365.4px;width:133.6px;height:21.3px;background:#fff;border-radius:10.7px;border:1px solid #ababab;box-shadow:inset 0 0 0 .6px rgba(0,0,0,.07),0 0 0 .4px rgba(0,0,0,.08);"></div>
<div style="left:642.1px;top:370.4px;width:93.9px;height:12.2px;background:#fff;border:0.7px solid #f1f1f1;"></div>
<span class="s" style="left:645.40px;top:372px;font-size:6.6px;line-height:9px;color:#252423;transform:scaleX(0.8597);transform-origin:0 0;">All</span>
<svg style="left:726.4px;top:375px" width="6.4" height="3.6" viewBox="0 0 6.4 3.6"><path d="M.4 .4L3.2 3.1L6.0 .4" stroke="#555" stroke-width="0.8" fill="none"/></svg>
<div style="left:750.8px;top:365.4px;width:133.8px;height:21.3px;background:#fff;border-radius:10.7px;border:1px solid #ababab;box-shadow:inset 0 0 0 .6px rgba(0,0,0,.07),0 0 0 .4px rgba(0,0,0,.08);"></div>
<div style="left:777.2px;top:370.4px;width:93.8px;height:12.2px;background:#fff;border:0.7px solid #f1f1f1;"></div>
<span class="s" style="left:780.50px;top:372px;font-size:6.6px;line-height:9px;color:#252423;transform:scaleX(0.8597);transform-origin:0 0;">All</span>
<svg style="left:861.4px;top:375px" width="6.4" height="3.6" viewBox="0 0 6.4 3.6"><path d="M.4 .4L3.2 3.1L6.0 .4" stroke="#555" stroke-width="0.8" fill="none"/></svg>
<svg style="left:476px;top:362px" width="312" height="28" viewBox="476 362 312 28"><path d="M489 370h5.4a3 3 0 0 1 3 3v5.7a3 3 0 0 1-3 3H486v-8.700000000000001a3 3 0 0 1 3-3z" fill="#a3a3a3"/><path d="M488.7 374.5h6.2M488.7 377.4h4.5" stroke="#444" stroke-width="1"/><rect x="622.8" y="369.8" width="12" height="12.1" rx="2.6" fill="#a4a4a4"/><path d="M622.8 376.3v-3.9a2.6 2.6 0 0 1 2.6-2.6h6.8a2.6 2.6 0 0 1 2.6 2.6v3.9z" fill="#7c7c7c"/><rect x="626.8" y="369.8" width="4" height="6.4" rx="1.2" fill="#2b2b2b"/><path d="M627 381.9v-1.500000000000000a1.9 1.9 0 0 1 3.8 0v1.5z" fill="#2b2b2b"/><circle cx="765.5" cy="375.8" r="5.7" fill="#a3a3a3"/><circle cx="765.5" cy="374.8" r="2" fill="#2e2e2e"/><ellipse cx="765.5" cy="379.5" rx="3.6" ry="1.6" fill="#2e2e2e"/></svg>
<div style="left:190.7px;top:448.4px;width:688px;height:24.1px;background:#e6e6e6;"></div>
<div style="left:190.7px;top:495.8px;width:688px;height:22.9px;background:#e6e6e6;"></div>
<div style="left:190.7px;top:398.2px;width:688px;height:18.8px;background:#004c99;"></div>
<div style="left:246.1px;top:398.2px;width:0.6px;height:18.8px;background:rgba(255,255,255,.18);"></div>
<div style="left:345.5px;top:398.2px;width:0.6px;height:18.8px;background:rgba(255,255,255,.18);"></div>
<div style="left:392.5px;top:398.2px;width:0.6px;height:18.8px;background:rgba(255,255,255,.18);"></div>
<div style="left:475.5px;top:398.2px;width:0.6px;height:18.8px;background:rgba(255,255,255,.18);"></div>
<div style="left:527.3px;top:398.2px;width:0.6px;height:18.8px;background:rgba(255,255,255,.18);"></div>
<div style="left:581.9px;top:398.2px;width:0.6px;height:18.8px;background:rgba(255,255,255,.18);"></div>
<div style="left:672.2px;top:398.2px;width:0.6px;height:18.8px;background:rgba(255,255,255,.18);"></div>
<div style="left:728.5px;top:398.2px;width:0.6px;height:18.8px;background:rgba(255,255,255,.18);"></div>
<div style="left:797.0px;top:398.2px;width:0.6px;height:18.8px;background:rgba(255,255,255,.18);"></div>
<div style="left:868.7px;top:398.2px;width:0.6px;height:18.8px;background:rgba(255,255,255,.18);"></div>
<span style="left:207.56px;top:401px;font-size:6.6px;line-height:9px;font-weight:700;color:#fff;transform:scaleX(0.8961);transform-origin:50% 0;">Entitas</span>
<span style="left:276.13px;top:401px;font-size:6.6px;line-height:9px;font-weight:700;color:#fff;transform:scaleX(0.9239);transform-origin:50% 0;">Profit Center</span>
<span style="left:348.78px;top:401px;font-size:6.6px;line-height:9px;font-weight:700;color:#fff;transform:scaleX(0.9404);transform-origin:50% 0;">Doc. Number</span>
<span style="left:423.12px;top:401px;font-size:6.6px;line-height:9px;font-weight:700;color:#fff;transform:scaleX(0.9347);transform-origin:50% 0;">Vendor</span>
<span style="left:481.43px;top:401px;font-size:6.6px;line-height:9px;font-weight:700;color:#fff;transform:scaleX(0.9495);transform-origin:50% 0;">Nilai Tagihan</span>
<span style="left:528.70px;top:401px;font-size:6.6px;line-height:9px;font-weight:700;color:#fff;transform:scaleX(0.9178);transform-origin:50% 0;">Catatan Rejector</span>
<span style="left:605.55px;top:401px;font-size:6.6px;line-height:9px;font-weight:700;color:#fff;transform:scaleX(0.9149);transform-origin:50% 0;">PIC Submitter</span>
<span style="left:681.04px;top:401px;font-size:6.6px;line-height:9px;font-weight:700;color:#fff;transform:scaleX(0.9001);transform-origin:50% 0;">PIC Rejector</span>
<span style="left:744.60px;top:401px;font-size:6.6px;line-height:9px;font-weight:700;color:#fff;transform:scaleX(0.9158);transform-origin:50% 0;">Reject Time</span>
<span style="left:809.57px;top:401px;font-size:6.6px;line-height:9px;font-weight:700;color:#fff;transform:scaleX(0.9225);transform-origin:50% 0;">Resubmit Time</span>
<svg style="left:731px;top:410.6px" width="4" height="2.4" viewBox="0 0 4 2.4"><path d="M0 0h4L2 2.4z" fill="#fff"/></svg>
<div style="left:190.7px;top:417px;width:688px;height:102px;overflow:hidden">
<span class="s" style="left:2.90px;top:3px;font-size:6.7px;line-height:9px;color:#1c1b1a;transform:scaleX(0.8070);transform-origin:0 0;">SPJM</span>
<span class="s" style="left:58.30px;top:3px;font-size:6.7px;line-height:9px;color:#1c1b1a;transform:scaleX(0.9058);transform-origin:0 0;">Cabang Tanjung Priok</span>
<span class="s" style="left:157.20px;top:3px;font-size:6.7px;line-height:9px;color:#1c1b1a;transform:scaleX(0.9031);transform-origin:0 0;">5100001544</span>
<span class="s" style="left:205.10px;top:3px;font-size:6.7px;line-height:9px;color:#1c1b1a;transform:scaleX(0.8681);transform-origin:0 0;">CAHAYA MATUARI</span>
<span class="s" style="left:300.92px;top:3px;font-size:6.7px;line-height:9px;color:#1c1b1a;transform:scaleX(0.8600);transform-origin:100% 0;">97,023,712</span>
<span class="s" style="left:340.00px;top:3px;font-size:6.7px;line-height:9px;color:#1c1b1a;transform:scaleX(0.7674);transform-origin:0 0;">REJECTED</span>
<span class="s" style="left:394.30px;top:3px;font-size:6.7px;line-height:9px;color:#1c1b1a;transform:scaleX(0.8954);transform-origin:0 0;">IMAM MUSHAF HADI NUR</span>
<span class="s" style="left:485.30px;top:3px;font-size:6.7px;line-height:9px;color:#1c1b1a;transform:scaleX(0.8748);transform-origin:0 0;">19921205429</span>
<span class="s" style="left:540.10px;top:3px;font-size:6.7px;line-height:9px;color:#1c1b1a;transform:scaleX(0.9102);transform-origin:0 0;">6/22/2025 1:00:48 PM</span>
<span class="s" style="left:680.90px;top:3px;font-size:6.7px;line-height:9px;color:#1c1b1a;transform:scaleX(0.8600);transform-origin:0 0;">Do</span>
<span class="s" style="left:680.90px;top:12px;font-size:6.7px;line-height:9px;color:#1c1b1a;transform:scaleX(0.8600);transform-origin:0 0;">3. J</span>
<span class="s" style="left:680.90px;top:20px;font-size:6.7px;line-height:9px;color:#1c1b1a;transform:scaleX(0.8600);transform-origin:0 0;">Wh</span>
<span class="s" style="left:2.90px;top:35px;font-size:6.7px;line-height:9px;color:#1c1b1a;transform:scaleX(0.8070);transform-origin:0 0;">SPJM</span>
<span class="s" style="left:58.30px;top:35px;font-size:6.7px;line-height:9px;color:#1c1b1a;transform:scaleX(0.9058);transform-origin:0 0;">Cabang Tanjung Priok</span>
<span class="s" style="left:157.20px;top:35px;font-size:6.7px;line-height:9px;color:#1c1b1a;transform:scaleX(0.9031);transform-origin:0 0;">5100001543</span>
<span class="s" style="left:205.10px;top:35px;font-size:6.7px;line-height:9px;color:#1c1b1a;transform:scaleX(0.8681);transform-origin:0 0;">CAHAYA MATUARI</span>
<span class="s" style="left:297.20px;top:35px;font-size:6.7px;line-height:9px;color:#1c1b1a;transform:scaleX(0.8600);transform-origin:100% 0;">103,588,976</span>
<span class="s" style="left:340.00px;top:35px;font-size:6.7px;line-height:9px;color:#1c1b1a;transform:scaleX(0.7674);transform-origin:0 0;">REJECTED</span>
<span class="s" style="left:394.30px;top:35px;font-size:6.7px;line-height:9px;color:#1c1b1a;transform:scaleX(0.8954);transform-origin:0 0;">IMAM MUSHAF HADI NUR</span>
<span class="s" style="left:485.30px;top:35px;font-size:6.7px;line-height:9px;color:#1c1b1a;transform:scaleX(0.8748);transform-origin:0 0;">19921205429</span>
<span class="s" style="left:540.10px;top:35px;font-size:6.7px;line-height:9px;color:#1c1b1a;transform:scaleX(0.9133);transform-origin:0 0;">6/22/2025 12:39:58 PM</span>
<span class="s" style="left:680.90px;top:35px;font-size:6.7px;line-height:9px;color:#1c1b1a;transform:scaleX(0.8600);transform-origin:0 0;">Do</span>
<span class="s" style="left:680.90px;top:44px;font-size:6.7px;line-height:9px;color:#1c1b1a;transform:scaleX(0.8600);transform-origin:0 0;">08</span>
<span class="s" style="left:2.90px;top:58px;font-size:6.7px;line-height:9px;color:#1c1b1a;transform:scaleX(0.8070);transform-origin:0 0;">SPJM</span>
<span class="s" style="left:58.30px;top:58px;font-size:6.7px;line-height:9px;color:#1c1b1a;transform:scaleX(0.8947);transform-origin:0 0;">Cabang Palembang</span>
<span class="s" style="left:157.20px;top:58px;font-size:6.7px;line-height:9px;color:#1c1b1a;transform:scaleX(0.9031);transform-origin:0 0;">5100001600</span>
<span class="s" style="left:205.10px;top:58px;font-size:6.7px;line-height:9px;color:#1c1b1a;transform:scaleX(0.8485);transform-origin:0 0;">MITRA MARITIME ENERGY</span>
<span class="s" style="left:297.20px;top:58px;font-size:6.7px;line-height:9px;color:#1c1b1a;transform:scaleX(0.8600);transform-origin:100% 0;">449,000,000</span>
<span class="s" style="left:340.00px;top:58px;font-size:6.7px;line-height:9px;color:#1c1b1a;transform:scaleX(0.7674);transform-origin:0 0;">REJECTED</span>
<span class="s" style="left:394.30px;top:58px;font-size:6.7px;line-height:9px;color:#1c1b1a;transform:scaleX(0.8411);transform-origin:0 0;">TRI WALUYO</span>
<span class="s" style="left:485.30px;top:58px;font-size:6.7px;line-height:9px;color:#1c1b1a;transform:scaleX(0.8748);transform-origin:0 0;">19921205429</span>
<span class="s" style="left:540.10px;top:58px;font-size:6.7px;line-height:9px;color:#1c1b1a;transform:scaleX(0.9133);transform-origin:0 0;">6/22/2025 12:31:20 PM</span>
<span class="s" style="left:680.90px;top:58px;font-size:6.7px;line-height:9px;color:#1c1b1a;transform:scaleX(0.8600);transform-origin:0 0;">Do</span>
<span class="s" style="left:680.90px;top:67px;font-size:6.7px;line-height:9px;color:#1c1b1a;transform:scaleX(0.8600);transform-origin:0 0;">Wh</span>
<span class="s" style="left:2.90px;top:82px;font-size:6.7px;line-height:9px;color:#1c1b1a;transform:scaleX(0.8070);transform-origin:0 0;">SPJM</span>
<span class="s" style="left:58.30px;top:82px;font-size:6.7px;line-height:9px;color:#1c1b1a;transform:scaleX(0.8947);transform-origin:0 0;">JAI Head Office</span>
<span class="s" style="left:157.20px;top:82px;font-size:6.7px;line-height:9px;color:#1c1b1a;transform:scaleX(0.9031);transform-origin:0 0;">5100001596</span>
<span class="s" style="left:205.10px;top:82px;font-size:6.7px;line-height:9px;color:#1c1b1a;transform:scaleX(0.8386);transform-origin:0 0;">ORCHID GRIYA NUTRISI</span>
<span class="s" style="left:300.92px;top:82px;font-size:6.7px;line-height:9px;color:#1c1b1a;transform:scaleX(0.8600);transform-origin:100% 0;">81,645,000</span>
<span class="s" style="left:340.00px;top:82px;font-size:6.7px;line-height:9px;color:#1c1b1a;transform:scaleX(0.7674);transform-origin:0 0;">REJECTED</span>
<span class="s" style="left:394.30px;top:82px;font-size:6.7px;line-height:9px;color:#1c1b1a;transform:scaleX(0.8287);transform-origin:0 0;">AL KAUTSAR</span>
<span class="s" style="left:485.30px;top:82px;font-size:6.7px;line-height:9px;color:#1c1b1a;transform:scaleX(0.8748);transform-origin:0 0;">19921205429</span>
<span class="s" style="left:540.10px;top:82px;font-size:6.7px;line-height:9px;color:#1c1b1a;transform:scaleX(0.9133);transform-origin:0 0;">6/22/2025 12:24:50 PM</span>
<span class="s" style="left:680.90px;top:82px;font-size:6.7px;line-height:9px;color:#1c1b1a;transform:scaleX(0.8600);transform-origin:0 0;">Do</span>
<span class="s" style="left:680.90px;top:91px;font-size:6.7px;line-height:9px;color:#1c1b1a;transform:scaleX(0.8600);transform-origin:0 0;">ter</span>
<span class="s" style="left:680.90px;top:99px;font-size:6.7px;line-height:9px;color:#1c1b1a;transform:scaleX(0.8600);transform-origin:0 0;">dan</span>
</div>
<div style="left:881px;top:400.5px;width:2.2px;height:2.2px;background:#a6a6a6;border-radius:1.1px;"></div>
<div style="left:191px;top:520.6px;width:397px;height:3.6px;background:#9c9c9c;border-radius:1.8px;"></div>
<div style="left:0px;top:524.6px;width:1024px;height:52px;background:#f3f3f3;"></div>
<div style="left:0px;top:559.3px;width:1024px;height:0.8px;background:#e0e0e0;"></div>
<div style="left:88.3px;top:525px;width:0.8px;height:34.3px;background:#e0e0e0;"></div>
<div style="left:230.4px;top:525px;width:0.8px;height:34.3px;background:#e0e0e0;"></div>
<span style="left:40.40px;top:536px;font-size:10.4px;line-height:13px;color:#333;transform:scaleX(0.9379);transform-origin:0 0;">Go back</span>
<span style="left:117.80px;top:536px;font-size:10.4px;line-height:13px;color:#666;transform:scaleX(0.9869);transform-origin:0 0;">Monitoring Reject</span>
<span style="left:791.90px;top:536px;font-size:10.4px;line-height:13px;color:#444;transform:scaleX(0.9037);transform-origin:0 0;">Dashboard FSS Keuan...</span>
<div style="left:904.8px;top:536.3px;width:1px;height:10.8px;background:#444;"></div>
<span style="left:912.60px;top:536px;font-size:10.4px;line-height:13px;color:#444;transform:scaleX(0.9825);transform-origin:0 0;">Data updated 6/22/25</span>
<svg style="left:17px;top:536px" width="12" height="12" viewBox="0 0 12 12"><path d="M10.4 6H1.8M5.4 2.2L1.6 6l3.8 3.8" stroke="#444" stroke-width=".9" fill="none"/></svg>
<svg style="left:101px;top:536px" width="11" height="12" viewBox="0 0 11 12"><path d="M1 3.3h8.4M1 6h6M1 8.7h8.4" stroke="#555" stroke-width=".9" fill="none"/></svg>
<svg style="left:212px;top:539px" width="8" height="6" viewBox="0 0 8 6"><path d="M1 1.5L4 4.5L7 1.5" stroke="#666" stroke-width=".9" fill="none"/></svg>
<svg style="left:244px;top:536px" width="10" height="12" viewBox="0 0 10 12"><path d="M6.2 2.6L2.8 6l3.4 3.4" stroke="#444" stroke-width=".9" fill="none"/></svg>
<svg style="left:278px;top:536px" width="10" height="12" viewBox="0 0 10 12"><path d="M3.8 2.6L7.2 6L3.8 9.4" stroke="#444" stroke-width=".9" fill="none"/></svg>
<svg style="left:312px;top:536px" width="12" height="12" viewBox="0 0 12 12"><path d="M10.5 1.5L6.8 5.2M6.8 2.4v2.8h2.8M1.5 10.5l3.7-3.7M5.2 9.6V6.8H2.4" stroke="#333" stroke-width=".9" fill="none"/></svg>
<span class="s" style="left:871.86px;top:563px;font-size:8px;line-height:11px;color:#333;transform:scaleX(1.0000);transform-origin:50% 0;">-</span>
<div style="left:878.3px;top:567.6px;width:72.3px;height:0.8px;background:#777;"></div>
<div style="left:905.2px;top:564.2px;width:2.2px;height:7.7px;background:#444;"></div>
<div style="left:914.4px;top:566.4px;width:0.7px;height:3.2px;background:#777;"></div>
<span style="left:954.37px;top:562px;font-size:9px;line-height:12px;color:#333;transform:scaleX(1.0000);transform-origin:50% 0;">+</span>
<span class="s" style="left:969.70px;top:563px;font-size:8px;line-height:11px;color:#666;transform:scaleX(1.0302);transform-origin:0 0;">80%</span>
<svg style="left:1000.5px;top:563.5px" width="11" height="8" viewBox="0 0 11 8"><rect x=".5" y=".6" width="10" height="6.6" rx="1" fill="none" stroke="#666" stroke-width=".9"/><path d="M2.4 3V2.4h1M8.6 3V2.4h-1M2.4 4.8v.7h1M8.6 4.8v.7h-1" stroke="#666" stroke-width=".7" fill="none"/></svg>
<div style="left:1017px;top:0px;width:6px;height:510px;background:#888;border-radius:1px 1px 3px 3px;"></div>
<div style="left:1023px;top:0px;width:1px;height:508px;background:#d0d0d0;"></div>
</div></body></html>
